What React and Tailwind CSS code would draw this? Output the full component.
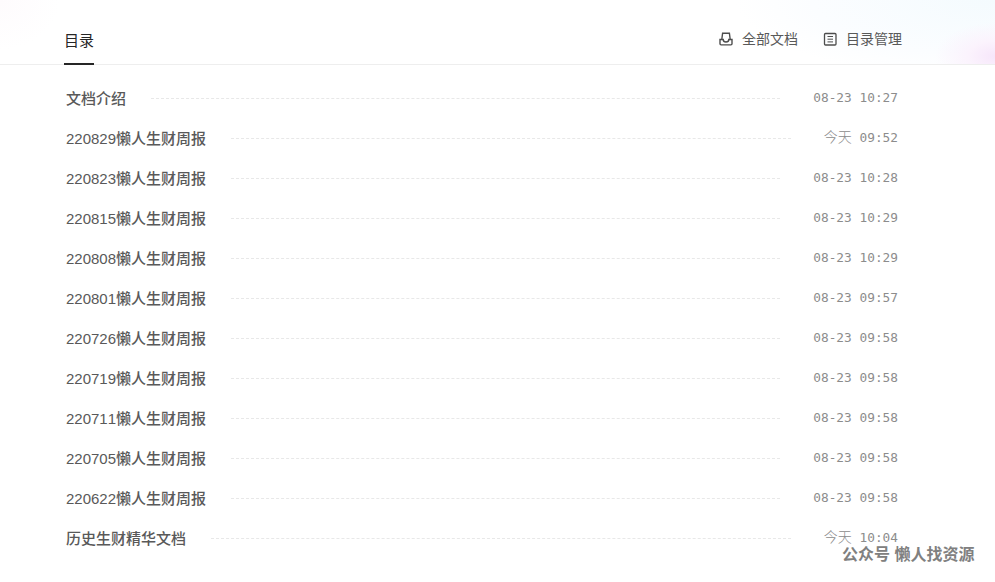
const rows = [
  ["文档介绍", "08-23", "10:27"],
  ["220829懒人生财周报", "今天", "09:52"],
  ["220823懒人生财周报", "08-23", "10:28"],
  ["220815懒人生财周报", "08-23", "10:29"],
  ["220808懒人生财周报", "08-23", "10:29"],
  ["220801懒人生财周报", "08-23", "09:57"],
  ["220726懒人生财周报", "08-23", "09:58"],
  ["220719懒人生财周报", "08-23", "09:58"],
  ["220711懒人生财周报", "08-23", "09:58"],
  ["220705懒人生财周报", "08-23", "09:58"],
  ["220622懒人生财周报", "08-23", "09:58"],
  ["历史生财精华文档", "今天", "10:04"],
];

function InboxIcon() {
  return (
    <svg width="14" height="14" viewBox="0 0 14 14" fill="none" stroke="#4d4d4d" strokeWidth="1.4">
      <path d="M2.800 7.500L3.600 1.200h6.800l.8 6.300" />
      <path d="M1 7.500v4.300c0 .6.500 1.100 1.100 1.100h9.800c.6 0 1.100-.5 1.100-1.100V7.500H9.800c0 1.500-1.200 2.500-2.800 2.500S4.200 9 4.200 7.500H1z" />
    </svg>
  );
}

function ListIcon() {
  return (
    <svg width="14" height="14" viewBox="0 0 14 14" fill="none" stroke="#4d4d4d" strokeWidth="1.300">
      <rect x="1.500" y="1.500" width="11.500" height="11.500" rx="1" />
      <path d="M4.500 4.500h5.500M4.500 7.200h5.500M4.500 9.900h5.500" strokeWidth="1" />
    </svg>
  );
}

export default function App() {
  return (
    <div className="relative h-[582px] w-[995px] overflow-hidden bg-white font-['Liberation_Sans','Noto_Sans_CJK_SC',sans-serif]">
      <div className="flex h-[65px] items-end justify-between border-b border-[#eeeeee] bg-[radial-gradient(ellipse_60px_34px_at_100%_88%,#f6e6fa_0%,#fbf3fd_45%,transparent_100%),radial-gradient(ellipse_260px_80px_at_100%_0%,#f4fbfe_0%,#fbfdff_70%,transparent_100%),radial-gradient(ellipse_60px_50px_at_0%_0%,#fefbfd_0%,#ffffff_100%)] pl-16 pr-[93px]">
        <div className="-mb-px flex h-[50px] w-[30px] items-center border-b-2 border-[#262626] pt-[5px] text-[15px] text-[#262626]">
          <span className="whitespace-nowrap">目录</span>
        </div>
        <div className="mb-[15px] flex h-[20px] items-center gap-[25px] text-[14px] text-[#595959]">
          <div className="flex items-center gap-[9px]"><InboxIcon /><span>全部文档</span></div>
          <div className="flex items-center gap-[9px]"><ListIcon /><span>目录管理</span></div>
        </div>
      </div>
      <div className="pl-[66px] pr-[97px] pt-[13px]">
        {rows.map(([title, date, time], i) => (
          <div key={i} className="flex h-10 items-center">
            <span className="whitespace-nowrap pt-[2px] text-[15px] font-medium text-[#595959] [font-kerning:none]">{title}</span>
            <div className="ml-[25px] mr-[33px] h-0 flex-1 border-t border-dashed border-[#e8e8e8]" />
            <span className="whitespace-pre font-['DejaVu_Sans_Mono','Noto_Sans_CJK_SC',monospace] text-[12.8px] leading-5 text-[#8c8c8c]">
              <span className={date === "今天" ? "text-[14px] font-light leading-none" : ""}>{date}</span>{" " + time}
            </span>
          </div>
        ))}
      </div>
      <div className="absolute left-[842px] top-[543px] whitespace-pre text-[16px] font-bold text-[#808080]">公众号 懒人找资源</div>
    </div>
  );
}
